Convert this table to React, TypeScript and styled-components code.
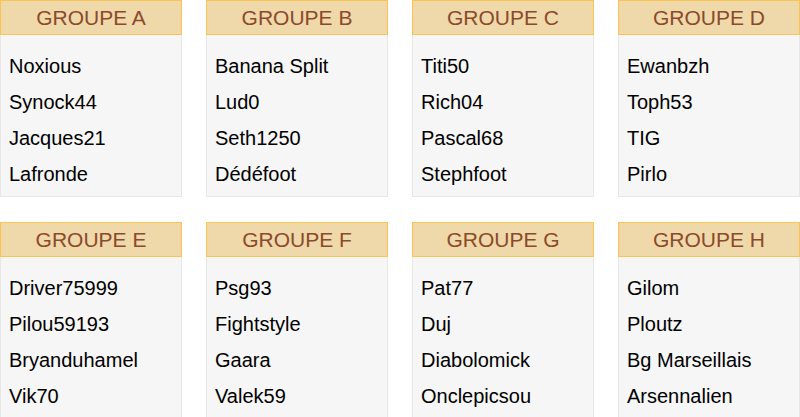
import styled, { createGlobalStyle } from "styled-components";

const groups = [
  { name: "Groupe A", players: ["Noxious", "Synock44", "Jacques21", "Lafronde"] },
  { name: "Groupe B", players: ["Banana Split", "Lud0", "Seth1250", "Dédéfoot"] },
  { name: "Groupe C", players: ["Titi50", "Rich04", "Pascal68", "Stephfoot"] },
  { name: "Groupe D", players: ["Ewanbzh", "Toph53", "TIG", "Pirlo"] },
  { name: "Groupe E", players: ["Driver75999", "Pilou59193", "Bryanduhamel", "Vik70"] },
  { name: "Groupe F", players: ["Psg93", "Fightstyle", "Gaara", "Valek59"] },
  { name: "Groupe G", players: ["Pat77", "Duj", "Diabolomick", "Onclepicsou"] },
  { name: "Groupe H", players: ["Gilom", "Ploutz", "Bg Marseillais", "Arsennalien"] },
];

function App() {
  return (
    <>
      <GlobalStyle />
      <Grid>
        {groups.map((group) => (
          <Card key={group.name}>
            <CardHeader>{group.name}</CardHeader>
            <PlayerList>
              {group.players.map((player) => (
                <Player key={player}>{player}</Player>
              ))}
            </PlayerList>
          </Card>
        ))}
      </Grid>
    </>
  );
}

const GlobalStyle = createGlobalStyle`
  body {
    margin: 0;
    background: #ffffff;
    font-family: "Liberation Sans", Arial, sans-serif;
    overflow: hidden;
  }
`;

const Grid = styled.div`
  display: grid;
  grid-template-columns: repeat(4, 182px);
  column-gap: 24px;
  row-gap: 25px;
  width: 800px;
`;

const Card = styled.div`
  display: flex;
  flex-direction: column;
`;

const CardHeader = styled.div`
  height: 33px;
  display: flex;
  align-items: center;
  justify-content: center;
  background: #efd8a9;
  border: 1px solid #fbc452;
  color: #8b4a2b;
  font-size: 21px;
  text-transform: uppercase;
`;

const PlayerList = styled.ul`
  list-style: none;
  margin: 0;
  padding: 13px 0 4px 8px;
  background: #f6f6f6;
  border: 1px solid #e7e7e7;
  border-top: none;
`;

const Player = styled.li`
  height: 36px;
  line-height: 36px;
  font-size: 20px;
  color: #000000;
`;

export default App;
